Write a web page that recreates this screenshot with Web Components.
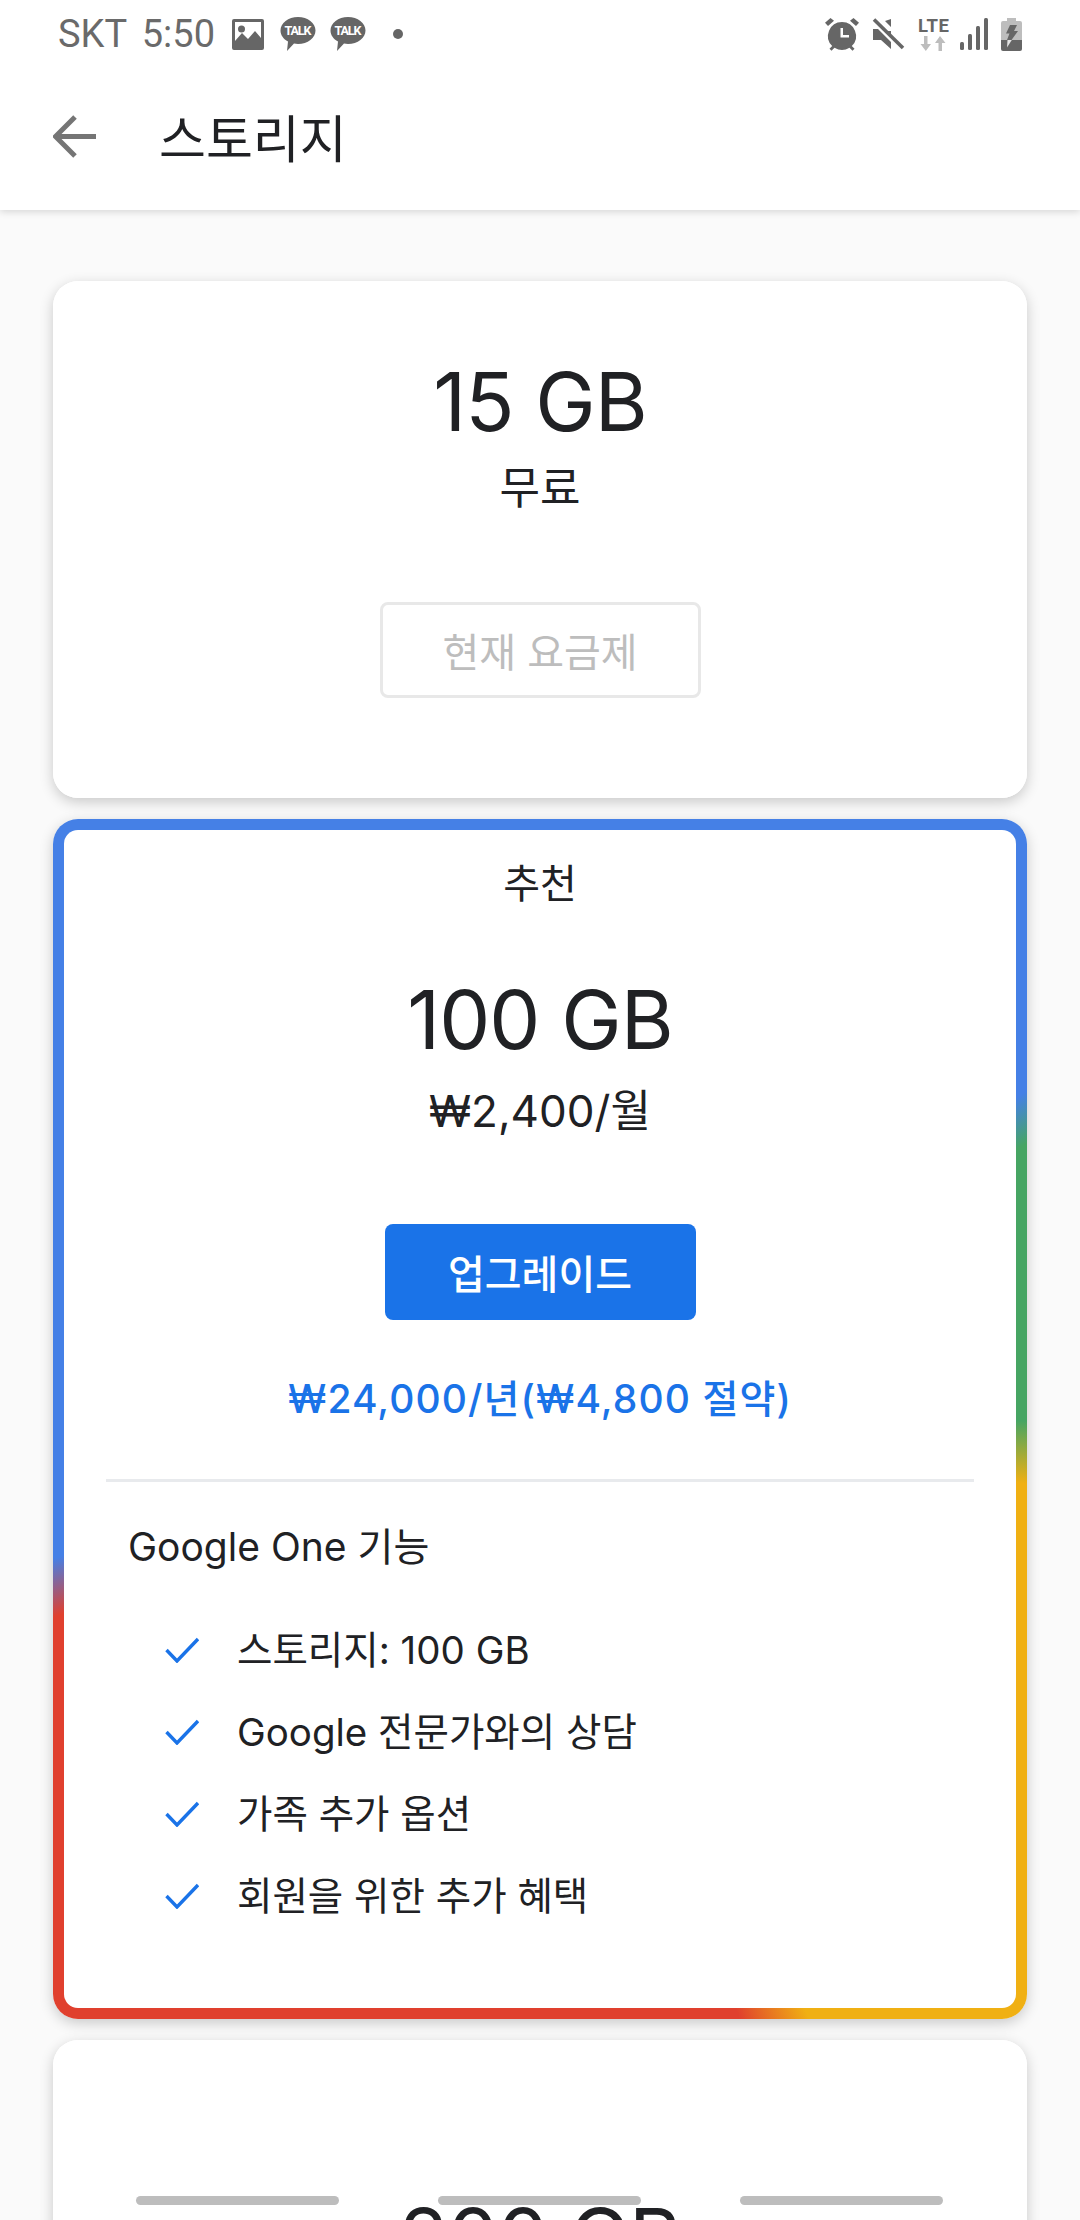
<!DOCTYPE html>
<html lang="ko">
<head>
<meta charset="utf-8">
<title>스토리지</title>
<style>
  html, body { margin: 0; padding: 0; height: 2220px; overflow: hidden; background: #fafafa; }
  body { font-family: "Inter", "Noto Sans CJK KR", sans-serif; color: #202124; }
</style>
</head>
<body>
<storage-page>
  <status-bar></status-bar>
  <app-bar slot="header" title="스토리지"></app-bar>
  <plan-card size="15 GB" price="무료">
    <plan-button disabled>현재 요금제</plan-button>
  </plan-card>
  <plan-card size="100 GB" price="₩2,400/월" badge="추천" recommended>
    <plan-button>업그레이드</plan-button>
    <div slot="annual">₩24,000/년(₩4,800 절약)</div>
    <feature-list slot="features" heading="Google One 기능">
      <feature-item>스토리지: 100 GB</feature-item>
      <feature-item>Google 전문가와의 상담</feature-item>
      <feature-item>가족 추가 옵션</feature-item>
      <feature-item>회원을 위한 추가 혜택</feature-item>
    </feature-list>
  </plan-card>
  <plan-card size="200 GB" tall></plan-card>
  <scroll-hints></scroll-hints>
</storage-page>

<script>
  class StoragePage extends HTMLElement {
    constructor() {
      super();
      this.attachShadow({ mode: "open" });
      this.shadowRoot.innerHTML = `
        <style>
          :host { display: block; position: relative; height: 2220px; overflow: hidden; background: #fafafa; }
          header { background: #fff; box-shadow: 0 2px 7px rgba(0,0,0,.14); position: relative; }
          main { display: flex; flex-direction: column; gap: 21px; padding: 71px 53px 0; }
        </style>
        <header><slot name="status"></slot><slot name="header"></slot></header>
        <main><slot></slot></main>
        <slot name="overlay"></slot>
      `;
      this.querySelector("status-bar").slot = "status";
      this.querySelector("scroll-hints").slot = "overlay";
    }
  }

  class StatusBar extends HTMLElement {
    constructor() {
      super();
      this.attachShadow({ mode: "open" });
      const talk = (margin) => `<svg style="margin-left:${margin}px" width="36" height="36" viewBox="0 0 36 36"><path d="M18 1c9.700 0 17.500 6 17.500 13.500S27.700 28 18 28c-1.400 0-2.700-.1-4-.4L7 35l1-9.400C3.500 23.200.5 19.100.5 14.500.5 7 8.300 1 18 1z"/><text x="18" y="19" text-anchor="middle" font-size="12.500" textLength="27" fill="#fff">TALK</text></svg>`;
      this.shadowRoot.innerHTML = `
        <style>
          :host { display: flex; align-items: center; height: 68px; padding: 0 58px 0 58px; color: #6a6a6a;
            font-family: Roboto, sans-serif; box-sizing: border-box; }
          .time { font-size: 38px; white-space: nowrap; margin-right: 17px; line-height: 68px; word-spacing: 6px; }
          .left, .right { display: flex; align-items: center; }
          .right { margin-left: auto; }
          svg { display: block; flex: none; fill: #666; overflow: visible; }
          text { font-family: Roboto, sans-serif; font-weight: 700; }
        </style>
        <div class="left">
          <span class="time">SKT 5:50</span>
          <svg width="32" height="31" viewBox="0 0 32 31"><path fill-rule="evenodd" d="M2 0h28a2 2 0 0 1 2 2v27a2 2 0 0 1-2 2H2a2 2 0 0 1-2-2V2a2 2 0 0 1 2-2zM3 3v19l7-8 6 6 7-8 6 7V3z"/><circle cx="9.500" cy="10" r="3.500"/></svg>
          ${talk(16)}
          ${talk(14)}
          <svg style="margin-left:27px" width="10" height="10" viewBox="0 0 10 10"><circle cx="5" cy="5" r="5"/></svg>
        </div>
        <div class="right">
          <svg width="34" height="34" viewBox="0 0 34 34"><path d="M5.500 1 9 3.800 3 9 0 5.800zM28.500 1 34 5.800 31 9l-6-5.200z"/><path fill-rule="evenodd" d="M17 5a14 14 0 0 1 9.800 24l2.700 2.700-2 2-3-3a14 14 0 0 1-15 0l-3 3-2-2L7.200 29A14 14 0 0 1 17 5zm-1.500 6v9.500H24V18h-6v-7z"/></svg>
          <svg style="margin-left:13px" width="32" height="32" viewBox="0 0 32 32"><path d="M19 1v8L13 3zM1 11h5l13 13v7l-10-9H1zM19 13v5l-6-5z"/><path d="M2 1.500 31 30" stroke="#666" stroke-width="3.600" fill="none"/></svg>
          <svg style="margin-left:13px" width="33" height="34" viewBox="0 0 33 34"><text x="16.500" y="15" text-anchor="middle" font-size="18.500" textLength="31">LTE</text><path fill="#bdbdbd" d="M7 19h3.500v8H14l-5.200 7L3.500 27H7zM23 19l5.500 7H25v8h-3.500v-8H18z"/></svg>
          <svg style="margin-left:10px" width="28" height="32" viewBox="0 0 28 32"><rect x="0" y="24" width="4" height="8" rx="1.500"/><rect x="8" y="16" width="4" height="16" rx="1.500"/><rect x="16" y="8" width="4" height="24" rx="1.500"/><rect x="24" y="0" width="4" height="32" rx="1.500"/></svg>
          <svg style="margin-left:13px" width="21" height="33" viewBox="0 0 21 33"><path fill="#bdbdbd" d="M6 0h9v3h4a2 2 0 0 1 2 2v17H0V5a2 2 0 0 1 2-2h4z"/><path d="M0 22h21v9a2 2 0 0 1-2 2H2a2 2 0 0 1-2-2z"/><path d="M9 7h7l-3 6h4l-6.500 9H6l2.500-6.500H5z"/><path fill="#e4e4e4" d="M6.500 22h4.300L6 29.500z"/></svg>
        </div>
      `;
    }
  }

  class AppBar extends HTMLElement {
    constructor() {
      super();
      this.attachShadow({ mode: "open" });
      this.shadowRoot.innerHTML = `
        <style>
          :host { display: flex; align-items: center; height: 142px; padding: 0 0 6px 53px; box-sizing: border-box; }
          svg { display: block; flex: none; }
          h1 { margin: 0 0 0 63px; font: 400 51px/1 "Noto Sans CJK KR", sans-serif; color: #202124; }
        </style>
        <svg width="43" height="43" viewBox="0 0 43 43"><path d="M43 21.500H3M22 2 2.500 21.500 22 41" fill="none" stroke="#757575" stroke-width="5"/></svg>
        <h1>${this.getAttribute("title")}</h1>
      `;
    }
  }

  class PlanCard extends HTMLElement {
    constructor() {
      super();
      const badge = this.getAttribute("badge");
      const price = this.getAttribute("price");
      const size = this.getAttribute("size");
      this.attachShadow({ mode: "open" });
      this.shadowRoot.innerHTML = `
        <style>
          :host { display: block; border-radius: 25px; background: #fff; box-shadow: 0 4px 14px rgba(0,0,0,.2); }
          :host([recommended]) {
            padding: 11px;
            background: conic-gradient(#4580e6 0deg, #4580e6 56deg, #46a563 60.500deg, #46a563 90.200deg,
              #f0b013 97.600deg, #f0b013 155.800deg, #e0402e 161.600deg, #e0402e 247.800deg, #4580e6 254deg, #4580e6 360deg);
          }
          .inner { display: flex; flex-direction: column; align-items: center; background: #fff; border-radius: 25px;
            padding: 73px 0 100px; font-family: "Noto Sans CJK KR", sans-serif; color: #202124; }
          :host([recommended]) .inner { padding: 23px 0 71px; border-radius: 14px; }
          :host([tall]) .inner { padding-top: 150px; }
          .badge { font-size: 40px; line-height: 56px; margin-bottom: 63px; }
          .size { font: 400 81px/96px "Inter", "Noto Sans CJK KR", sans-serif; letter-spacing: -1px; }
          .price { font-size: 44px; line-height: 56px; margin: 10px 0 86px; font-family: "Inter", "Noto Sans CJK KR", sans-serif; }
          :host([recommended]) .price { margin: 15px 0 85px; }
          ::slotted([slot="annual"]) { color: #1a73e8; font: 500 39px/56px "Inter", "Noto Sans CJK KR", sans-serif; letter-spacing: 1.100px; margin-top: 51px; }
          ::slotted([slot="features"]) { align-self: stretch; }
        </style>
        <div class="inner">
          ${badge ? `<div class="badge">${badge}</div>` : ""}
          <div class="size">${size}</div>
          ${price ? `<div class="price">${price}</div>` : ""}
          <slot></slot>
          <slot name="annual"></slot>
          <slot name="features"></slot>
        </div>
      `;
    }
  }

  class PlanButton extends HTMLElement {
    constructor() {
      super();
      this.attachShadow({ mode: "open" });
      this.shadowRoot.innerHTML = `
        <style>
          :host { display: flex; align-items: center; justify-content: center; box-sizing: border-box;
            width: 311px; height: 96px; border-radius: 8px; background: #1a73e8; color: #fff;
            font: 500 40px/1 "Noto Sans CJK KR", sans-serif; }
          :host([disabled]) { width: 321px; background: #fff; border: 3px solid #e8e8e8; color: #bdbdbd; font-weight: 400; }
        </style>
        <slot></slot>
      `;
    }
  }

  class FeatureList extends HTMLElement {
    constructor() {
      super();
      this.attachShadow({ mode: "open" });
      this.shadowRoot.innerHTML = `
        <style>
          :host { display: block; margin-top: 52px; padding: 0 42px 0 42px; box-sizing: border-box; }
          hr { border: 0; height: 3px; background: #e8eaed; margin: 0 0 37px; }
          h2 { margin: 0 0 34px 22px; font: 400 39px/56px "Inter", "Noto Sans CJK KR", sans-serif; color: #202124; }
          .items { display: flex; flex-direction: column; padding-left: 59px; }
        </style>
        <hr>
        <h2>${this.getAttribute("heading")}</h2>
        <div class="items"><slot></slot></div>
      `;
    }
  }

  class FeatureItem extends HTMLElement {
    constructor() {
      super();
      this.attachShadow({ mode: "open" });
      this.shadowRoot.innerHTML = `
        <style>
          :host { display: flex; align-items: center; height: 82px; gap: 40px;
            font: 400 38.500px/56px "Inter", "Noto Sans CJK KR", sans-serif; color: #202124; }
          svg { display: block; flex: none; }
          span { margin-left: -2px; }
        </style>
        <svg width="34" height="26" viewBox="0 0 34 26"><path d="M1.500 13 12 24 33 2" fill="none" stroke="#1a73e8" stroke-width="3.400"/></svg>
        <span><slot></slot></span>
      `;
    }
  }

  class ScrollHints extends HTMLElement {
    constructor() {
      super();
      this.attachShadow({ mode: "open" });
      this.shadowRoot.innerHTML = `
        <style>
          :host { position: absolute; left: 136px; top: 2196px; width: 807px; display: flex; justify-content: space-between; }
          i { display: block; width: 203px; height: 9px; border-radius: 5px; background: #bdbdbd; }
        </style>
        <i></i><i></i><i></i>
      `;
    }
  }

  window.customElements.define("status-bar", StatusBar);
  window.customElements.define("app-bar", AppBar);
  window.customElements.define("plan-button", PlanButton);
  window.customElements.define("feature-item", FeatureItem);
  window.customElements.define("feature-list", FeatureList);
  window.customElements.define("plan-card", PlanCard);
  window.customElements.define("scroll-hints", ScrollHints);
  window.customElements.define("storage-page", StoragePage);
</script>
</body>
</html>
